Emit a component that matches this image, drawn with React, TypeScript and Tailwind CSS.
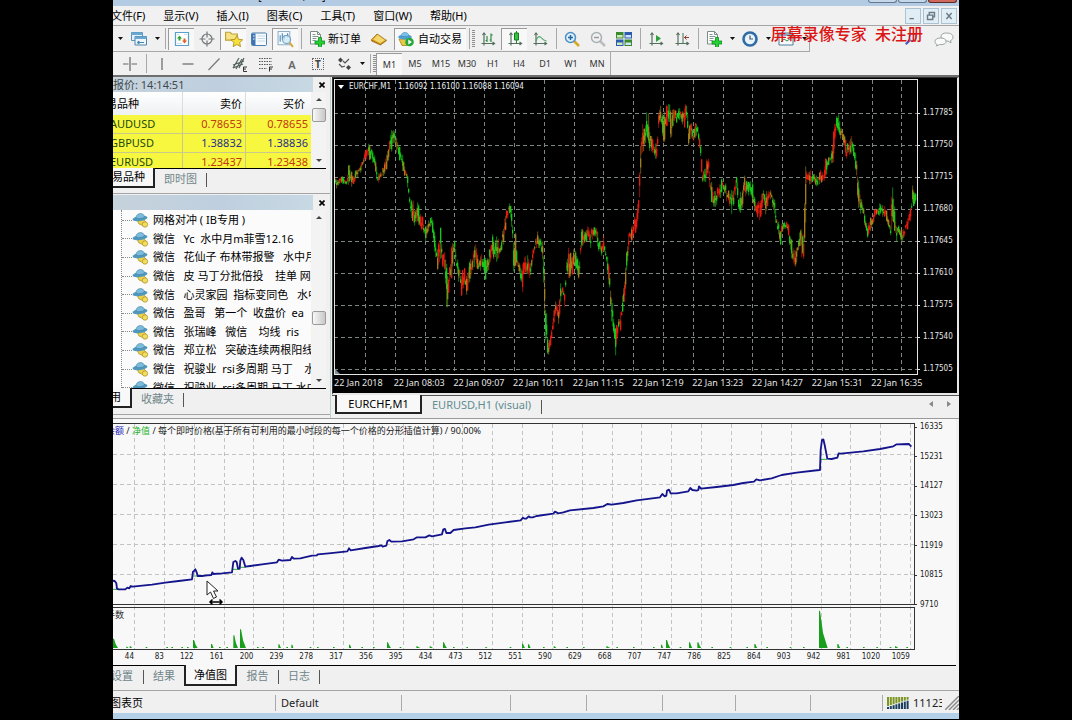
import clsx from 'clsx'
import type { ReactNode } from 'react'

type Band = [number, number, number]
type Point = [number, number]

const FONT = "font-['Noto_Sans','Noto_Sans_CJK_SC',sans-serif]"

const MENUS = ['文件(F)', '显示(V)', '插入(I)', '图表(C)', '工具(T)', '窗口(W)', '帮助(H)']

const TIMEFRAMES = ['M1', 'M5', 'M15', 'M30', 'H1', 'H4', 'D1', 'W1', 'MN']

const QUOTES = [
  { symbol: 'AUDUSD', bid: '0.78653', ask: '0.78655', up: false },
  { symbol: 'GBPUSD', bid: '1.38832', ask: '1.38836', up: true },
  { symbol: 'EURUSD', bid: '1.23437', ask: '1.23438', up: false },
]

const EXPERTS = [
  '网格对冲 ( IB专用 )',
  '微信   Yc  水中月m菲雪12.16',
  '微信   花仙子 布林带报警   水中月',
  '微信   皮 马丁分批倍投    挂单 网格',
  '微信   心灵家园  指标变同色   水中月',
  '微信   盈哥   第一个  收盘价  ea',
  '微信   张瑞峰   微信    均线  ris    k线',
  '微信   郑立松   突破连续两根阳线',
  '微信   祝骏业  rsi多周期 马丁    水中',
  '微信   祝骏业  rsi多周期 马丁 水中月',
]

const PRICES = ['1.17785', '1.17750', '1.17715', '1.17680', '1.17645', '1.17610', '1.17575', '1.17540', '1.17505']
const TIMES = ['2018', '08:03', '09:07', '10:11', '11:15', '12:19', '13:23', '14:27', '15:31', '16:35']

const BALANCES = ['16335', '15231', '14127', '13023', '11919', '10815', '9710']
const TRADES = [
  44, 83, 122, 161, 200, 239, 278, 317, 356, 395, 434, 473, 512, 551, 590, 629, 668, 707, 747, 786, 825, 864, 903,
  942, 981, 1020, 1059,
]

// Fiyat grafiği: [x, üst, alt], birim = 1/3 piksel
const BANDS_EARLY: Band[] = [
  [8, 290, 325], [14, 310, 340], [30, 300, 325], [45, 315, 330], [50, 260, 325], [62, 295, 330], [70, 275, 310],
  [85, 265, 295], [95, 240, 270], [105, 205, 250], [118, 210, 250], [128, 240, 270], [137, 290, 330],
  [150, 280, 310], [160, 250, 305], [168, 225, 260], [175, 165, 235], [183, 165, 210], [190, 170, 220],
  [200, 210, 240], [208, 215, 270], [218, 270, 300], [226, 285, 320], [232, 340, 390], [240, 370, 465],
  [250, 390, 445], [257, 365, 440], [264, 415, 455], [272, 420, 465], [280, 455, 495], [290, 425, 475],
  [298, 418, 450], [305, 440, 495], [312, 500, 560], [318, 520, 580], [325, 450, 540], [332, 520, 595],
  [338, 510, 580], [345, 580, 710], [352, 585, 640], [360, 510, 600], [367, 480, 520], [374, 540, 590],
  [382, 570, 620], [388, 580, 660], [397, 575, 625], [405, 600, 670], [413, 560, 620], [422, 540, 580],
  [431, 480, 560], [440, 555, 590], [450, 535, 575], [460, 545, 608], [470, 540, 580], [480, 470, 550],
  [488, 500, 545], [497, 480, 560], [505, 510, 540], [515, 440, 500], [524, 400, 445], [532, 372, 400],
  [538, 375, 450], [545, 460, 580], [552, 480, 585], [560, 560, 595], [570, 570, 655], [578, 530, 600],
  [586, 540, 600], [595, 570, 605], [602, 510, 560], [610, 490, 520], [616, 465, 510], [624, 490, 520],
  [631, 485, 530], [636, 540, 690], [641, 650, 820], [648, 780, 835], [654, 790, 825], [660, 735, 810],
  [666, 690, 750], [674, 675, 710], [680, 700, 750], [686, 625, 690], [693, 620, 660], [698, 650, 690],
  [703, 565, 600], [712, 510, 600], [720, 530, 600], [728, 515, 570], [736, 540, 600], [742, 560, 605],
  [748, 460, 520], [758, 465, 500], [766, 455, 490], [776, 455, 515], [784, 450, 480], [792, 447, 485],
  [800, 480, 530], [808, 500, 540], [815, 480, 530], [824, 530, 560], [830, 550, 620], [837, 620, 720],
  [844, 710, 780], [852, 760, 860], [858, 740, 775], [866, 700, 760], [874, 640, 720], [880, 560, 650],
  [886, 500, 570], [893, 455, 500], [900, 455, 495], [908, 425, 470], [915, 400, 460], [920, 350, 420],
  [926, 210, 330], [932, 125, 220], [938, 130, 240], [943, 95, 200], [950, 110, 230], [957, 170, 225],
]
const BANDS_LATE: Band[] = [
  [38, 175, 225], [45, 205, 245], [50, 205, 248], [54, 155, 200], [58, 58, 160], [66, 115, 170], [72, 120, 200],
  [80, 90, 160], [88, 85, 140], [94, 110, 205], [102, 100, 138], [110, 105, 140], [118, 85, 140], [126, 95, 150],
  [134, 80, 155], [138, 62, 130], [146, 150, 205], [153, 130, 170], [160, 170, 210], [168, 140, 180],
  [174, 150, 180], [180, 180, 240], [188, 290, 325], [197, 265, 315], [205, 237, 300], [213, 310, 370],
  [222, 345, 395], [230, 345, 390], [238, 315, 375], [248, 310, 350], [256, 320, 370], [264, 340, 375],
  [275, 345, 412], [284, 310, 370], [290, 290, 360], [296, 360, 410], [304, 350, 405], [315, 292, 360],
  [322, 315, 355], [330, 310, 355], [337, 315, 370], [345, 370, 410], [355, 380, 425], [362, 370, 430],
  [370, 330, 380], [378, 345, 430], [386, 345, 380], [394, 345, 370], [402, 365, 420], [410, 410, 460],
  [420, 460, 512], [428, 440, 480], [436, 438, 460], [445, 440, 470], [452, 480, 540], [458, 510, 575],
  [466, 515, 580], [472, 505, 545], [478, 470, 530], [485, 465, 540], [490, 490, 572], [495, 255, 520],
  [500, 280, 320], [508, 275, 325], [515, 295, 330], [522, 295, 325], [532, 300, 330], [540, 272, 330],
  [550, 290, 325], [558, 245, 300], [568, 245, 265], [576, 220, 265], [582, 160, 260], [588, 125, 165],
  [595, 108, 180], [603, 150, 190], [610, 165, 200], [618, 195, 250], [626, 210, 240], [635, 172, 240],
  [643, 205, 260], [650, 260, 320], [656, 320, 400], [664, 355, 410], [672, 400, 425], [678, 420, 480],
  [684, 440, 500], [690, 430, 470], [698, 420, 445], [706, 400, 430], [714, 385, 420], [722, 385, 415],
  [730, 385, 420], [738, 390, 430], [746, 425, 460], [752, 445, 485], [757, 318, 470], [763, 360, 480],
  [768, 440, 500], [775, 440, 475], [783, 455, 495], [790, 465, 500], [797, 440, 470], [804, 420, 455],
  [812, 385, 440], [818, 330, 400], [824, 335, 395], [830, 350, 370],
]
const BANDS: Band[] = [
  ...BANDS_EARLY.map(([x, t, b]): Band => [x - 6, t - 9, b - 9]),
  ...BANDS_LATE.map(([x, t, b]): Band => [x + 918, t - 9, b - 9]),
]

// Bakiye eğrisi, birim = 1/3 piksel
const EQUITY_EARLY: Point[] = [
  [0, 512], [8, 513], [13, 520], [15, 536], [20, 538], [40, 538], [46, 533], [52, 535], [56, 528], [62, 530],
  [120, 524], [160, 518], [200, 513], [240, 508], [243, 485], [247, 482], [250, 478], [254, 487], [257, 498],
  [270, 498], [285, 496], [298, 495], [301, 487], [304, 492], [330, 490], [360, 487], [364, 456], [370, 453],
  [374, 456], [378, 476], [383, 476], [385, 452], [389, 443], [394, 450], [400, 470], [415, 468], [450, 463],
  [495, 457], [500, 449], [510, 452], [535, 450], [540, 441], [545, 446], [565, 445], [600, 437], [615, 436],
  [617, 433], [650, 430], [706, 424], [711, 415], [716, 421], [760, 414], [800, 408], [808, 406], [812, 410],
  [823, 407], [826, 394], [832, 390], [838, 395], [870, 394], [905, 388], [915, 382], [940, 382], [952, 376],
  [960, 379], [990, 373], [994, 358], [999, 357], [1003, 369], [1015, 369], [1025, 360], [1060, 355],
  [1090, 352], [1130, 344], [1180, 337], [1226, 331], [1233, 323], [1238, 326], [1243, 326], [1250, 319],
]
const EQUITY_LATE: Point[] = [
  [0, 322], [8, 322], [20, 318], [70, 311], [75, 305], [85, 310], [100, 307], [120, 301], [190, 294], [220, 289],
  [232, 282], [245, 284], [280, 279], [320, 271], [390, 262], [397, 252], [404, 259], [409, 257], [411, 242],
  [417, 239], [422, 250], [440, 250], [475, 244], [481, 234], [487, 240], [500, 242], [505, 240], [507, 229],
  [513, 236], [560, 231], [610, 225], [640, 219], [672, 215], [679, 208], [690, 211], [725, 205], [755, 195],
  [800, 188], [868, 180], [870, 180], [872, 120], [876, 90], [880, 88], [884, 105], [892, 146], [905, 147],
  [922, 143], [926, 130], [932, 131], [1000, 124], [1050, 117], [1090, 109], [1100, 103], [1137, 102],
  [1144, 110],
]
const EQUITY = [
  ...EQUITY_EARLY.map(([x, y]) => [x - 3, y - 36]),
  ...EQUITY_LATE.map(([x, y]) => [x + 1251, y - 36]),
]
  .map((p) => p.join(','))
  .join(' ')

// Lot çubukları: [x, yükseklik, genişlik]
const LOTS: Band[] = [
  [0, 28, 15], [40, 4, 6], [50, 5, 7], [240, 24, 14], [294, 12, 8], [361, 38, 14], [381, 56, 18], [496, 11, 8],
  [535, 10, 6], [708, 10, 7], [822, 17, 12], [910, 5, 12], [950, 5, 10], [990, 17, 12], [1117, 3, 6],
  [1227, 13, 9], [1245, 11, 8], [1322, 5, 8], [1480, 5, 12], [1644, 10, 6], [1659, 24, 13], [1728, 17, 10],
  [1753, 17, 12], [1924, 12, 9], [2118, 112, 26], [2173, 12, 9], [2346, 5, 10],
]
const LOT_TICKS = [
  98, 160, 175, 205, 222, 318, 340, 432, 448, 520, 590, 612, 660, 745, 780, 860, 1020, 1060, 1190, 1290, 1360,
  1410, 1510, 1560, 1620, 1700, 1795, 1850, 1900, 1960, 2030, 2070, 2200, 2250, 2290, 2330, 2380,
]

function buildCandles() {
  let seed = 7
  const rand = () => {
    seed = (seed * 16807) % 2147483647
    return seed / 2147483647
  }
  const out = []
  let k = 0
  for (let x = 2; x < 1746; x += 3) {
    while (k < BANDS.length - 2 && BANDS[k + 1][0] < x) k++
    const [x0, t0, b0] = BANDS[k]
    const [x1, t1, b1] = BANDS[k + 1]
    const f = Math.min(1, Math.max(0, (x - x0) / (x1 - x0)))
    const top = t0 + (t1 - t0) * f
    const bottom = b0 + (b1 - b0) * f
    const range = bottom - top
    const slope = (t1 + b1 - t0 - b0) / (x1 - x0)
    const up = rand() < (slope < -4 ? 0.85 : slope > 4 ? 0.15 : 0.5)
    const high = top + range * (rand() * 0.5 - 0.1)
    const low = bottom - range * (rand() * 0.5 - 0.1)
    const open = high + (low - high) * rand() * 0.5
    const close = low - (low - high) * rand() * 0.5
    out.push({ x, high, low, open, close, up, mixed: rand() < 0.28 })
  }
  return out
}

const CANDLES = buildCandles()

function Caret() {
  return (
    <span className="flex w-[10px] shrink-0 justify-center">
      <svg width="5" height="3" viewBox="0 0 5 3">
        <path d="M0 0h5L2.5 3z" fill="#111" />
      </svg>
    </span>
  )
}

function Sep() {
  return (
    <span className="flex w-[6px] shrink-0 justify-center self-stretch py-[2px]">
      <span className="w-px bg-[#a8a8a8]" />
    </span>
  )
}

function Grip() {
  return <span className="h-[18px] w-[3px] shrink-0 bg-[repeating-linear-gradient(#8f8f8f_0_1px,transparent_1px_2px)]" />
}

function Tool({ label, pressed, children }: { label: string; pressed?: boolean; children: ReactNode }) {
  return (
    <button
      aria-label={label}
      className={clsx(
        'flex h-[22px] w-[26px] shrink-0 items-center justify-center',
        pressed && 'border-l border-t border-[#9a9a9a] bg-[#f8f8f8]'
      )}
    >
      {children}
    </button>
  )
}

function Icon({ size = 16, children }: { size?: number; children: ReactNode }) {
  return (
    <svg width={size} height={size} viewBox="0 0 16 16" fill="none" className="shrink-0">
      {children}
    </svg>
  )
}

const axes = (
  <g stroke="#55705f" strokeWidth="1.200">
    <path d="M4 2v12.500M1.500 12.500h13" />
    <path d="M2.500 4L4 2l1.500 2M12.500 11l2 1.500-2 1.500" />
  </g>
)

const greenPlus = (
  <path d="M9.500 6.500h3V10H16v3h-3.500v3.500h-3V13H6v-3h3.500z" fill="#25d235" stroke="#0b8a1c" strokeWidth=".8" />
)

const sheet = (
  <>
    <path d="M1.500.5h7l3 3v9.500h-10z" fill="#fff" stroke="#7a8c86" />
    <path d="M8.500.5v3h3" stroke="#7a8c86" />
    <path d="M3.500 3.500h3M3.500 5.500h6M3.500 7.500h4M3.500 9.500h3" stroke="#7e9690" />
  </>
)

function PanelTitle({ text }: { text?: string }) {
  return (
    <div className="flex h-[15px] items-center bg-linear-to-r from-[#c6d3dc] via-[#bfcfdf] to-[#c9dbe4] text-[11px] leading-[14px] text-[#3f4a50]">
      <span className="flex-1 -indent-[22px] whitespace-nowrap">{text}</span>
      <button aria-label="关闭" className="flex h-full w-[17px] items-center justify-center bg-[#f0f0f0]">
        <svg width="6" height="6" viewBox="0 0 6 6">
          <path d="M.5.5l5 5M5.500.5l-5 5" stroke="#000" strokeWidth="1.600" />
        </svg>
      </button>
    </div>
  )
}

function ScrollBar({ low }: { low?: boolean }) {
  return (
    <div className="flex w-[15px] shrink-0 flex-col items-center bg-[#f3f3f3] py-[6px]">
      <svg width="6" height="3" viewBox="0 0 6 3">
        <path d="M0 3h6L3 0z" fill="#444" />
      </svg>
      <div className={low ? 'grow-[12]' : 'h-[7px]'} />
      <button
        aria-label="滚动"
        className="h-[14px] w-[14px] rounded-[2px] border border-[#9b9b9b] bg-linear-to-r from-[#f8f8f8] to-[#c8c8c8]"
      />
      <div className={low ? 'grow-[7]' : 'grow'} />
      <svg width="6" height="3" viewBox="0 0 6 3">
        <path d="M0 0h6L3 3z" fill="#444" />
      </svg>
    </div>
  )
}

function Divider() {
  return <span className="mt-1 block h-[14px] w-px shrink-0 bg-[#555]" />
}

function TitleBar() {
  return (
    <div className="flex h-[6px] justify-between overflow-hidden bg-[#b3cce4]">
      <div className="flex items-end pb-1 pl-[145px] text-[11px] leading-[12px] text-[#222]">[EURCHF,M1]</div>
      <div className="flex h-[3px] shrink-0 gap-px pr-[2px]">
        <button aria-label="最小化" className="w-[29px] rounded-b-sm border border-t-0 border-[#64788f] bg-[#c4d8ea]" />
        <button aria-label="最大化" className="w-[29px] rounded-b-sm border border-t-0 border-[#64788f] bg-[#c4d8ea]" />
        <button aria-label="退出" className="w-[29px] rounded-b-sm border border-t-0 border-[#5b2a28] bg-[#cf6a5c]" />
      </div>
    </div>
  )
}

function MenuBar() {
  return (
    <div className="flex h-5 items-center justify-between border-b border-[#a5a5a5] bg-[#f1f1f1]">
      <nav className="-ml-[2px] flex gap-[18px] text-[11px] leading-4 text-black">
        {MENUS.map((m) => (
          <button key={m} className="whitespace-nowrap">
            {m}
          </button>
        ))}
      </nav>
      <div className="flex gap-[2px] pr-[2px]">
        {['M4 11h5', 'M4 7h6v5H4zM6 7V4h6v5h-2', 'M5 4.500l6 7M11 4.500l-6 7'].map((d, i) => (
          <button
            key={d}
            aria-label={['最小化', '还原', '关闭'][i]}
            className="flex h-4 w-4 items-center justify-center border border-[#a9c3d4] bg-[#e2eef6]"
          >
            <svg width="14" height="14" viewBox="0 0 16 16" fill="none" stroke="#6b7a86" strokeWidth="1.600">
              <path d={d} />
            </svg>
          </button>
        ))}
      </div>
    </div>
  )
}

function MainToolbar() {
  return (
    <div className="relative flex h-[26px] items-center justify-between">
      <div className="flex h-full items-center border-b border-r border-[#a8a8a8] pl-[2px]">
        <Caret />
        <span className="w-px" />
        <Tool label="图表配置">
          <Icon>
            <path d="M.5 1.500h11v8H.5z" fill="#e4f1fa" stroke="#5c93b8" />
            <path d="M.5 1.500h11V4H.5z" fill="#6aaad2" />
            <path d="M4 5.500h11.500V14H4z" fill="#eef7fc" stroke="#4a86b0" />
            <path d="M4 5.500h11.500V8H4z" fill="#6aaad2" />
            <path d="M7 11.500h6M6 11.500l2-1.500v3z" stroke="#4a86b0" />
          </Icon>
        </Tool>
        <Caret />
        <Sep />
        <Tool label="市场报价" pressed>
          <Icon>
            <path d="M1.500 1.500h13v13h-13z" fill="#fff" stroke="#59a0c8" strokeWidth="1.200" />
            <path d="M3 3.500h2M3 12.500h5M10 3.500h3" stroke="#c4dbe8" />
            <path d="M3 7.500L5.500 4.500 8 7.500H6.500v2h-2v-2z" fill="#2ba52f" />
            <path d="M8 9.500h1.500v-2h2v2H13l-2.500 3z" fill="#e0602b" />
          </Icon>
        </Tool>
        <Tool label="数据窗口">
          <Icon>
            <circle cx="8" cy="8" r="5" stroke="#70787a" strokeWidth="1.200" />
            <path d="M8 .5v6M8 9.500v6M.5 8h6M9.500 8h6" stroke="#70787a" strokeWidth="1.200" />
          </Icon>
        </Tool>
        <Tool label="导航" pressed>
          <Icon size={18}>
            <path d="M.5 2h4L6 3.500h5V9H.5z" fill="#f6e382" stroke="#c0a23a" />
            <path
              d="M10.500 5l1.600 3.300 3.600.4-2.700 2.500.8 3.600-3.300-1.900-3.300 1.900.8-3.600-2.700-2.500 3.600-.4z"
              fill="#f6e13c"
              stroke="#b3921b"
              strokeWidth=".8"
            />
          </Icon>
        </Tool>
        <Tool label="终端">
          <Icon>
            <rect x=".5" y="2" width="15" height="12.500" rx="1" fill="#f7fbff" stroke="#4a80ad" />
            <path d="M1 2.500h3.500V14H1z" fill="#3f74b0" />
            <path d="M2 5h1.500M2 8h1.500" stroke="#fff" />
            <path d="M6.500 5H14M6.500 7.500H14M6.500 10H14" stroke="#c3d8e8" />
          </Icon>
        </Tool>
        <Tool label="策略测试" pressed>
          <Icon size={17}>
            <path d="M1 .5h11V13H1z" fill="#f3f9fd" stroke="#8fb0c6" />
            <path d="M3 4v6M5 2v6M7 4v4M10 2v4" stroke="#4a86b5" />
            <circle cx="9" cy="8" r="3.800" fill="#cfe9f8" fillOpacity=".8" stroke="#6f9dbd" />
            <path d="M11.800 11l3.200 4" stroke="#d4a845" strokeWidth="2" />
          </Icon>
        </Tool>
        <Sep />
        <button className="flex h-[22px] w-[62px] shrink-0 items-center gap-[3px] whitespace-nowrap pl-[5px] text-[11px] leading-4 text-black">
          <Icon>
            {sheet}
            {greenPlus}
          </Icon>
          新订单
        </button>
        <Tool label="MetaEditor">
          <Icon>
            <path d="M.5 8.500L6 3l2.500 1.500 7 5L9.500 14 .5 10z" fill="#dba92b" stroke="#9a7420" strokeWidth=".8" />
            <path d="M2.500 8.500l4-4.500 7.500 5.200L9 12z" fill="#f5d76c" />
            <path d="M.5 9l9 4.500 6-4.500" stroke="#a87814" />
          </Icon>
        </Tool>
        <button className="ml-[2px] flex h-[22px] w-[72px] shrink-0 items-center gap-[4px] whitespace-nowrap border-l border-t border-[#9a9a9a] bg-[#f8f8f8] pl-[3px] text-[11px] leading-4 text-black">
          <Icon>
            <path d="M1 8h12l-3 6.500H4z" fill="#eac845" stroke="#a5841c" strokeWidth=".8" />
            <ellipse cx="7" cy="6" rx="6.800" ry="2.600" fill="#4d9fd3" />
            <path d="M3 5.500C3 0 11 0 11 5.500z" fill="#78c0e8" stroke="#3c86b5" strokeWidth=".6" />
            <circle cx="11.500" cy="11" r="4.300" fill="#23a83a" />
            <path d="M10.300 8.500l3.700 2.500-3.700 2.500z" fill="#fff" />
          </Icon>
          自动交易
        </button>
        <Sep />
        <Grip />
        <Tool label="柱状图">
          <Icon>
            {axes}
            <path d="M7 5v6M5.500 9.500H7M11 2.500V11M11 4h1.800M9.500 9H11" stroke="#2f8d43" strokeWidth="1.200" />
          </Icon>
        </Tool>
        <Tool label="阴阳烛" pressed>
          <Icon>
            {axes}
            <path d="M9.500 0v12" stroke="#1a8a2a" />
            <path d="M7.500 2h4v7h-4z" fill="#32c33f" stroke="#157c22" />
          </Icon>
        </Tool>
        <Tool label="折线图">
          <Icon>
            {axes}
            <path d="M4 10c1.500-5 3.500-5.500 5.500-3 1.500 2 3 2.500 5 3" stroke="#4ba566" strokeWidth="1.200" />
          </Icon>
        </Tool>
        <Sep />
        <Tool label="放大">
          <Icon>
            <path d="M10 10l5 5" stroke="#d7a824" strokeWidth="2.500" />
            <circle cx="6.500" cy="6.500" r="5" fill="#dff0fb" stroke="#4d90c4" strokeWidth="1.500" />
            <path d="M4 6.500h5M6.500 4v5" stroke="#2266a5" strokeWidth="1.500" />
          </Icon>
        </Tool>
        <Tool label="缩小">
          <Icon>
            <path d="M10 10l5 5" stroke="#bdbdbd" strokeWidth="2.500" />
            <circle cx="6.500" cy="6.500" r="5" fill="#f1f1f1" stroke="#a8b0b4" strokeWidth="1.500" />
            <path d="M4 6.500h5" stroke="#9b9b9b" strokeWidth="1.500" />
          </Icon>
        </Tool>
        <Tool label="平铺窗口">
          <Icon>
            <path d="M0 1h7.500v6.500H0z" fill="#3b8b2e" />
            <path d="M8.500 1H16v6.500H8.500z" fill="#2c5cb0" />
            <path d="M0 8.500h7.500V15H0z" fill="#2c5cb0" />
            <path d="M8.500 8.500H16V15H8.500z" fill="#3b8b2e" />
            <path d="M1 4h5.500v2.500H1zM1 11.500h5.500V14H1z" fill="#cdeab9" />
            <path d="M9.500 4H15v2.500H9.500zM9.500 11.500H15V14H9.500z" fill="#cfe2f7" />
          </Icon>
        </Tool>
        <Sep />
        <Tool label="自动滚动">
          <Icon>
            {axes}
            <path d="M8 4l5 3.500L8 11z" fill="#2f9e3c" />
          </Icon>
        </Tool>
        <Tool label="图表平移">
          <Icon>
            {axes}
            <path d="M9 2v10" stroke="#47705a" />
            <path d="M15 6.500h-5M12.500 4.500l-2 2 2 2" stroke="#9a3b30" />
          </Icon>
        </Tool>
        <Sep />
        <Tool label="技术指标">
          <Icon>
            {sheet}
            {greenPlus}
          </Icon>
        </Tool>
        <Caret />
        <Tool label="周期">
          <Icon>
            <circle cx="8" cy="8" r="6.500" fill="#e8f3fb" stroke="#2f6ba5" strokeWidth="2.600" />
            <path d="M8 4.500V8h3" stroke="#44586b" strokeWidth="1.200" />
          </Icon>
        </Tool>
        <Caret />
        <Tool label="模板">
          <Icon>
            <path d="M1 2h14v12H1z" fill="#f5fafd" stroke="#4e7f9e" />
            <path d="M1 2h14v3H1z" fill="#7fb0cf" />
            <path d="M3 11l3-3 3 2 4-3" stroke="#388f4b" />
          </Icon>
        </Tool>
        <Caret />
      </div>
      <div className="flex items-center gap-[16px] pr-[5px]">
        <button aria-label="搜索">
          <Icon size={14}>
            <circle cx="10" cy="6" r="4" fill="#dce9f8" stroke="#6b86c8" strokeWidth="1.500" />
            <path d="M7 9l-5 5" stroke="#3d5fc0" strokeWidth="2.500" />
          </Icon>
        </button>
        <button aria-label="聊天">
          <svg width="20" height="15" viewBox="0 0 20 15" fill="#fafafa" stroke="#9aa3a3">
            <path d="M12.500 1c4 0 6.500 1.500 6.500 4s-1.500 3-2.500 3.500l.5 2.500-3-2c-4 .3-7-1-7-4s2-4 5.500-4z" />
            <path d="M6.500 6C3 6 1 7.500 1 9.500s1 2.500 2 3L2.500 14l3-1.500C9 12.800 12 12 12 9.500S10 6 6.500 6z" />
          </svg>
        </button>
      </div>
      <div className="absolute right-[36px] -top-1 whitespace-pre text-base leading-6 font-medium text-[#dc1414]">
        屏幕录像专家  未注册
      </div>
    </div>
  )
}

function LineToolbar() {
  return (
    <div className="flex h-[25px] items-center border-b-2 border-[#6e6e6e]">
      <div className="flex h-full items-center border-r border-[#a8a8a8] pl-1">
        <Tool label="十字准线">
          <Icon>
            <path d="M8 1v14M1 8h5.500M9.500 8H15" stroke="#666" strokeWidth="1.200" />
          </Icon>
        </Tool>
        <Sep />
        <Tool label="垂直线">
          <Icon>
            <path d="M8 2v12" stroke="#666" strokeWidth="1.200" />
          </Icon>
        </Tool>
        <Tool label="水平线">
          <Icon>
            <path d="M2.500 8h11" stroke="#666" strokeWidth="1.200" />
          </Icon>
        </Tool>
        <Tool label="趋势线">
          <Icon>
            <path d="M2.500 14L13.500 2.500" stroke="#777" strokeWidth="1.200" />
          </Icon>
        </Tool>
        <Tool label="等距通道">
          <Icon>
            <path d="M1 12L7 2M4 13l6-10M7 12l5-10M1 9l11-4M1 12l10-4" stroke="#50605a" strokeWidth="1.200" />
            <path d="M15 11h-3.500v4.500H15M11.500 13H14" stroke="#333" />
          </Icon>
        </Tool>
        <Tool label="斐波那契">
          <Icon>
            <path d="M1 2.500h13M1 5.500h13M1 8.500h13M1 12.500h8" stroke="#555" strokeDasharray="1.500 1" />
            <path d="M11.500 15.500V11H15M11.500 13H14" stroke="#333" />
          </Icon>
        </Tool>
        <button aria-label="文字" className="h-[22px] w-[26px] text-[11px] font-semibold leading-[24px] text-[#666]">
          A
        </button>
        <button aria-label="文字标签" className="flex h-[22px] w-[26px] items-center justify-center">
          <span className="flex h-3 w-3 items-center justify-center border border-dotted border-[#666] text-[10px] font-bold leading-none text-[#444]">
            T
          </span>
        </button>
        <Tool label="箭头">
          <Icon>
            <path d="M4.500 1.500l2.500 2.500-2.500 2.500L2 4zM12.500 9l2.500 2.500-2.500 2.500-2.500-2.500z" fill="#444" />
            <path d="M3 8l3 3 3-1M7 5l2 2 4-4" stroke="#555" strokeWidth="1.200" />
          </Icon>
        </Tool>
        <Caret />
        <Sep />
        <Grip />
        {TIMEFRAMES.map((tf) => (
          <button
            key={tf}
            className={clsx(
              'h-[22px] w-[26px] shrink-0 text-[9px] leading-[22px] text-[#333]',
              tf === 'M1' && 'border-l border-t border-[#9a9a9a] bg-[#f8f8f8]'
            )}
          >
            {tf}
          </button>
        ))}
      </div>
    </div>
  )
}

function MarketWatch() {
  return (
    <section>
      <PanelTitle text="市场报价: 14:14:51" />
      <div className="mr-1 flex h-[77px] overflow-hidden border-b border-black bg-white">
        <table className="w-full flex-1 table-fixed border-separate border-spacing-0 self-start text-[11px] leading-4">
          <colgroup>
            <col className="w-[70px]" />
            <col className="w-[63px]" />
            <col />
          </colgroup>
          <thead>
            <tr className="h-[23px] bg-linear-to-b from-white to-[#eef0f2] text-black">
              <th className="-indent-[18px] border-r border-[#dcdcdc] p-0 text-left font-normal">交易品种</th>
              <th className="border-r border-[#dcdcdc] p-0 pr-[3px] text-right font-normal">卖价</th>
              <th className="p-0 pr-[6px] text-right font-normal">买价</th>
            </tr>
          </thead>
          <tbody>
            {QUOTES.map((q) => (
              <tr key={q.symbol} className={clsx('h-[19px] bg-[#f7f740]', q.up ? 'text-[#23308c]' : 'text-[#c23a10]')}>
                <td className="-indent-[3px] border-b border-r border-[#c9c98a] p-0 text-[#1d4a10]">{q.symbol}</td>
                <td className="border-b border-r border-[#c9c98a] p-0 pr-[3px] text-right">{q.bid}</td>
                <td className="border-b border-[#c9c98a] p-0 pr-[3px] text-right">{q.ask}</td>
              </tr>
            ))}
          </tbody>
        </table>
        <ScrollBar />
      </div>
      <div className="flex h-[25px] items-start border-b border-[#a5a5a5] text-[11px]">
        <button className="-mt-px h-5 w-[42px] -indent-3 whitespace-nowrap border-b-2 border-r-2 border-[#222] bg-[#f8f8f8] text-left text-black">
          交易品种
        </button>
        <button className="h-5 px-[9px] text-[#6f8588]">即时图</button>
        <Divider />
      </div>
    </section>
  )
}

function ExpertIcon() {
  return (
    <svg width="17" height="16" viewBox="0 0 17 16" className="shrink-0">
      <path d="M5 8l6-1 3 3-2 4-5-2z" fill="#ecd24c" stroke="#a98d24" strokeWidth=".7" />
      <circle cx="13" cy="12.500" r="2.700" fill="#f2dd5f" stroke="#a98d24" strokeWidth=".7" />
      <ellipse cx="8" cy="6.500" rx="7.500" ry="2.600" fill="#4f97bd" transform="rotate(-8 8 6.500)" />
      <path d="M4 6C4 .5 12 0 12.500 5 10 7 6 7 4 6z" fill="#7cbbdc" stroke="#3f7fa3" strokeWidth=".6" />
    </svg>
  )
}

function Navigator() {
  return (
    <section className="pt-px">
      <PanelTitle />
      <div className="mr-1 flex h-[179px] border-b border-black bg-[#fbfbfb]">
        <div className="ml-2 min-w-0 flex-1 overflow-hidden border-l border-dotted border-[#888]">
          <ul className="flex h-[187px] flex-col pt-px">
            {EXPERTS.map((name) => (
              <li key={name} className="flex flex-1 items-center text-[11px] leading-[18px] text-black">
                <span className="w-[10px] shrink-0 border-t border-dotted border-[#888]" />
                <ExpertIcon />
                <span className="whitespace-pre pl-1">{name}</span>
              </li>
            ))}
          </ul>
        </div>
        <ScrollBar low />
      </div>
      <div className="flex h-[26px] items-start border-b border-[#a5a5a5] text-[11px]">
        <button className="-mt-px h-5 w-[19px] -indent-[14px] whitespace-nowrap border-b-2 border-r-2 border-[#222] bg-[#f8f8f8] text-left text-black">
          常用
        </button>
        <button className="h-5 px-[9px] text-[#6f8588]">收藏夹</button>
        <Divider />
      </div>
    </section>
  )
}

function PriceChart() {
  return (
    <section className="min-w-0 flex-1">
      <div className="border-l border-t border-r-2 border-b-2 border-l-[#333] border-t-[#333] border-r-[#e8e8e8] border-b-[#e8e8e8] bg-black pl-px pt-px">
        <div className="flex">
          <div className="relative min-w-0 flex-1">
            <svg className="block h-[296px] w-full" viewBox="0 0 1752 888" preserveAspectRatio="none">
              <g stroke="#7c8784" strokeWidth="3" strokeDasharray="12 9" shapeRendering="crispEdges">
                {Array.from({ length: 19 }, (_, i) => {
                  const x = Math.round(31 + i * 29.8) * 3 + 1.5
                  return <line key={i} x1={x} x2={x} y1="3" y2="885" />
                })}
                {PRICES.map((p, i) => (
                  <line key={p} x1="0" x2="1752" y1={i * 96 + 103.5} y2={i * 96 + 103.5} />
                ))}
              </g>
              {CANDLES.map((c) => (
                <g key={c.x} stroke={c.mixed ? '#a8841c' : c.up ? '#ee1c10' : '#18d01c'}>
                  <line x1={c.x} x2={c.x} y1={c.high} y2={c.low} strokeWidth="3" strokeOpacity=".6" />
                  <line x1={c.x} x2={c.x} y1={c.open} y2={c.close} strokeWidth="3.500" />
                </g>
              ))}
              <rect x="1.500" y="1.500" width="1749" height="885" fill="none" stroke="#e4e4e4" strokeWidth="3" />
              <path d="M3 870l15 15H3z" fill="#7f8f9c" />
            </svg>
            <div className="absolute top-0 left-[4px] flex items-center gap-[5px] whitespace-pre font-['DejaVu_Sans_Condensed','DejaVu_Sans',sans-serif] text-[8px] leading-4 text-[#e8eef0]">
              <svg width="6" height="4" viewBox="0 0 6 4">
                <path d="M0 0h6L3 4z" fill="#fff" />
              </svg>
              EURCHF,M1   1.16092 1.16100 1.16088 1.16094
            </div>
          </div>
          <ul className="h-[296px] w-[39px] pt-[18px] font-['DejaVu_Sans_Condensed','DejaVu_Sans',sans-serif] text-[8px] text-[#e6e6e6]">
            {PRICES.map((p) => (
              <li key={p} className="flex h-8 items-center gap-[3px]">
                <span className="h-px w-[2px] bg-[#e6e6e6]" />
                {p}
              </li>
            ))}
          </ul>
        </div>
        <div className="flex h-[18px] pr-[26px] text-[9px] leading-4 text-[#e6e6e6]">
          {TIMES.map((t) => (
            <span key={t} className="flex-1 whitespace-nowrap">
              22 Jan {t}
            </span>
          ))}
        </div>
      </div>
      <div className="flex h-[23px] items-start border-t border-[#555] text-[11px]">
        <button className="-mt-px ml-[3px] h-[19px] w-[87px] border-r-2 border-b-2 border-l-2 border-[#222] bg-[#f8f8f8] leading-[18px] text-black">
          EURCHF,M1
        </button>
        <button className="h-[18px] px-[10px] leading-[18px] text-[#5f8d90]">EURUSD,H1 (visual)</button>
        <Divider />
        <div className="ml-auto flex gap-[14px] pt-[5px] pr-2">
          <button aria-label="向左">
            <svg width="4" height="6" viewBox="0 0 4 6">
              <path d="M4 0v6L0 3z" fill="#888" />
            </svg>
          </button>
          <button aria-label="向右">
            <svg width="4" height="6" viewBox="0 0 4 6">
              <path d="M0 0v6l4-3z" fill="#888" />
            </svg>
          </button>
        </div>
      </div>
    </section>
  )
}

function Tester() {
  return (
    <section className="border-t border-[#9a9a9a]">
      <div className="mr-[3px] border-b border-black bg-[#f8f8f8] pt-[3px]">
        <div className="flex">
          <div className="relative min-w-0 flex-1">
            <svg className="block h-[228px] w-full" viewBox="0 0 2406 684" preserveAspectRatio="none">
              <g stroke="#c2c4c4" strokeWidth="3" strokeDasharray="12 9" shapeRendering="crispEdges">
                {TRADES.map((t, i) => {
                  const x = Math.round(21 + i * 29.85) * 3 + 1.5
                  return <line key={t} x1={x} x2={x} y1="6" y2="680" />
                })}
                {[97.5, 187.5, 277.5, 367.5, 457.5].map((y) => (
                  <line key={y} x1="0" x2="2406" y1={y} y2={y} />
                ))}
              </g>
              <g fill="none" stroke="#333" strokeWidth="3">
                <path d="M0 3.500H2403V547H0M0 555H2403V681H0" shapeRendering="crispEdges" />
              </g>
              <g fill="#18a01c">
                {LOTS.map(([x, h, w]) => (
                  <path key={x} d={`M${x} ${678 - h}h3l${w * 0.35} ${h * 0.6}L${x + w} 678H${x}z`} />
                ))}
                {LOT_TICKS.map((x) => (
                  <path key={x} d={`M${x} 675h5v3h-5z`} />
                ))}
              </g>
              <g fill="none">
                <path d="M0 502h14M241 462h14M360 442h20M382 436h16M2122 112h20" stroke="#2eae35" strokeWidth="3" />
                <polyline points={EQUITY} stroke="#14148c" strokeWidth="5.500" strokeLinejoin="round" />
              </g>
            </svg>
            <p className="absolute top-px left-0 -indent-[7px] whitespace-nowrap text-[9px] leading-4 text-[#222]">
              <span className="text-[#2222b8]">余额</span> / <span className="text-[#22b52a]">净值</span> /
              每个即时价格(基于所有可利用的最小时段的每一个价格的分形插值计算) / 90.00%
            </p>
            <span className="absolute top-[186px] left-0 -indent-[7px] text-[9px] leading-[14px] text-[#333]">手数</span>
            <svg className="absolute top-[158px] left-[93px]" width="18" height="27" viewBox="0 0 18 27">
              <path d="M1 1v14l3.500-3 3 6.500 3-1.500-3-6H12z" fill="#fff" stroke="#222" />
              <path d="M4 22h12M6.500 19.500L4 22l2.500 2.500M13.500 19.500L16 22l-2.500 2.500" fill="none" stroke="#000" strokeWidth="1.500" />
            </svg>
          </div>
          <ul className="flex h-[188px] w-[41px] flex-col justify-between font-['DejaVu_Sans_Condensed','DejaVu_Sans',sans-serif] text-[8px] leading-[10px] text-[#222]">
            {BALANCES.map((b) => (
              <li key={b} className="flex items-center gap-[3px]">
                <span className="h-px w-[2px] bg-[#333]" />
                {b}
              </li>
            ))}
          </ul>
        </div>
        <div className="flex h-[15px] pr-[46px] text-right font-['DejaVu_Sans_Condensed','DejaVu_Sans',sans-serif] text-[8px] leading-[13px] text-[#222]">
          {TRADES.map((t, i) => (
            <span key={t} className={i === 0 ? 'w-[21px] shrink-0' : 'min-w-0 flex-1'}>
              {t}
            </span>
          ))}
        </div>
      </div>
      <div className="flex h-[24px] items-start text-[11px] leading-[19px] text-[#6f8588]">
        <button className="w-[30px] -indent-[2px] text-left">设置</button>
        <Divider />
        <button className="w-[40px]">结果</button>
        <button className="-mt-px h-[21px] w-[53px] border-r-2 border-b-2 border-l-2 border-[#222] bg-[#f8f8f8] text-black">
          净值图
        </button>
        <button className="w-[41px]">报告</button>
        <Divider />
        <button className="w-[40px]">日志</button>
        <Divider />
      </div>
    </section>
  )
}

function StatusBar() {
  return (
    <footer>
      <div className="grid h-[23px] grid-cols-[162fr_126fr_109fr_76fr_76fr_73fr_75fr_72fr_77fr] items-center border-t border-[#a5a5a5] pt-px text-[11px] leading-4 text-[#222]">
        <span className="-indent-[3px] text-black">图表页</span>
        <span className="border-l border-[#aaa] pl-[5px]">Default</span>
        {Array.from({ length: 6 }, (_, i) => (
          <span key={i} className="h-4 border-l border-[#aaa]" />
        ))}
        <div className="flex h-4 items-center border-l border-[#aaa] pl-1">
          <svg width="22" height="12" viewBox="0 0 22 12" className="mr-[4px] shrink-0">
            {Array.from({ length: 8 }, (_, i) => (
              <g key={i}>
                <path d={`M${i * 2.8} 0h2v${9 - i * 0.9}h-2z`} fill="#7c9420" />
                <path d={`M${i * 2.8} ${10 - i * 0.9}h2V12h-2z`} fill="#1a3f5e" />
              </g>
            ))}
          </svg>
          <span className="w-[29px] overflow-hidden whitespace-nowrap">11123</span>
          <svg width="14" height="14" viewBox="0 0 14 14" className="ml-auto shrink-0">
            <path d="M0 14L14 0M4 14L14 4M8 14l6-6M12 14l2-2" stroke="#8a8a8a" strokeWidth="1.500" />
          </svg>
        </div>
      </div>
      <div className="h-[6px] bg-[#b3d0e8]" />
    </footer>
  )
}

export default function App() {
  return (
    <div className="min-h-screen bg-black px-[113px] pb-px">
      <main className={clsx('overflow-hidden bg-[#f0f0f0]', FONT)}>
        <TitleBar />
        <MenuBar />
        <MainToolbar />
        <LineToolbar />
        {/* Sol paneller + fiyat grafiği */}
        <div className="flex">
          <aside className="w-[218px] shrink-0 border-r border-[#b9d3d3]">
            <MarketWatch />
            <Navigator />
          </aside>
          <span className="w-px" />
          <PriceChart />
        </div>
        <Tester />
        <StatusBar />
      </main>
    </div>
  )
}
